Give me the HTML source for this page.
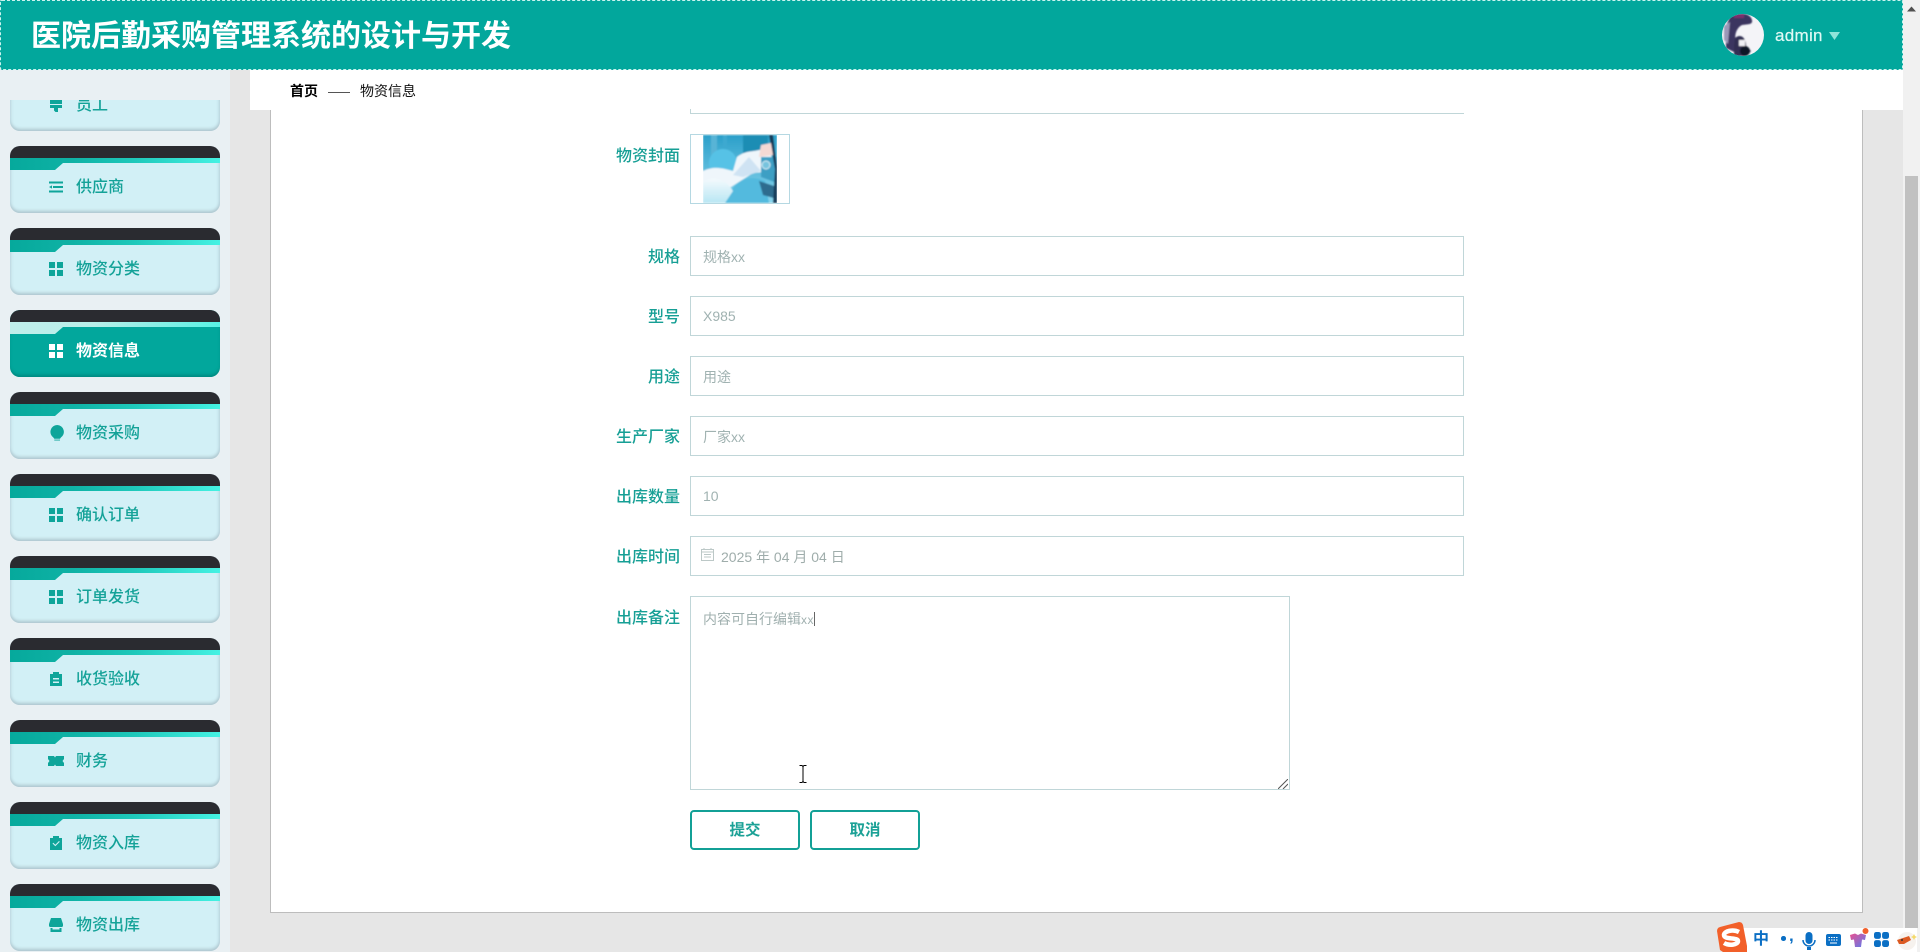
<!DOCTYPE html>
<html lang="zh">
<head>
<meta charset="utf-8">
<title>医院后勤采购管理系统的设计与开发</title>
<style>
html,body{margin:0;padding:0;width:1920px;height:952px;overflow:hidden;background:#e6e6e6;font-family:"Liberation Sans","Noto Sans CJK SC",sans-serif}
*{box-sizing:border-box}
.a{position:absolute}
#side{left:0;top:70px;width:230px;height:882px;background:#e9f0f3}
#clip{left:0;top:100px;width:230px;height:852px;overflow:hidden}
.card{position:absolute;left:10px;width:210px;height:67px;border-radius:10px;background:#d2f0f6;box-shadow:inset 0 -3px 3px -1px #aec6ce,inset 3px 0 3px -2px #c0dbe4,inset -3px 0 3px -2px #b8d4de;overflow:hidden}
.card .dk{position:absolute;left:0;top:0;width:100%;height:12px;background:#2a2b30}
.card .st{position:absolute;left:0;top:12px;width:100%;height:13px;background:linear-gradient(90deg,#06a99c 0%,#0fb2a5 30%,#1fc9bb 60%,#45f2e3 100%);clip-path:polygon(0 0,100% 0,100% 5px,53px 5px,45px 12px,0 12px)}
.card svg{position:absolute;left:39px;top:34px;width:14px;height:14px;fill:#0ea59a}
.card span{position:absolute;left:66px;top:31px;font-size:16px;line-height:22px;color:#14a298;font-weight:500;white-space:nowrap}
.card.on{background:#02a79c;box-shadow:inset 0 -3px 3px -1px #01887f}
.card.on .st{background:linear-gradient(90deg,#c0eeea,#b8efe9 40%,#58f2e4);clip-path:polygon(0 0,100% 0,100% 5px,53px 5px,45px 12px,0 12px)}
.card.on svg{fill:#fff}
.card.on span{color:#fff;font-weight:700}
.lb{position:absolute;right:1240px;font-size:16px;line-height:22px;color:#169f95;font-weight:500;white-space:nowrap}
.ip{position:absolute;left:690px;width:774px;height:40px;background:#fff;border:1px solid #c0d6d8;font-size:14px;line-height:40px;color:#a0b2b1;padding-left:12px;white-space:nowrap}
.btn{position:absolute;top:810px;width:110px;height:40px;border:2px solid #13a096;border-radius:4px;background:#fff;color:#1ba196;font-size:15.5px;font-weight:700;line-height:37px;text-align:center}
</style>
</head>
<body>
<div class="a" style="left:0;top:0;width:1920px;height:952px;background:#e6e6e6"></div>

<div class="a" id="side"></div>
<div class="a" id="clip">
  <div class="card" style="top:-36px"><div class="dk"></div><div class="st"></div>
    <svg viewBox="0 0 14 14"><path d="M1 0h12v6H1zM1 7h12v3H9v4H6.500L5 12.500V10H1z"/></svg><span>员工</span></div>
  <div class="card" style="top:46px"><div class="dk"></div><div class="st"></div>
    <svg viewBox="0 0 14 14"><path d="M0 1.500h14v2H0zM4 6h10v2H4zM0 10.500h14v2H0zM0 7l3-1.600v3.200z"/></svg><span>供应商</span></div>
  <div class="card" style="top:128px"><div class="dk"></div><div class="st"></div>
    <svg viewBox="0 0 14 14"><path d="M0 0h6v6H0zM8 0h6v6H8zM0 8h6v6H0zM8 8h6v6H8z"/></svg><span>物资分类</span></div>
  <div class="card on" style="top:210px"><div class="dk"></div><div class="st"></div>
    <svg viewBox="0 0 14 14"><path d="M0 0h6v6H0zM8 0h6v6H8zM0 8h6v6H0zM8 8h6v6H8z"/></svg><span>物资信息</span></div>
  <div class="card" style="top:292px"><div class="dk"></div><div class="st"></div>
    <svg viewBox="0 0 14 14" style="top:33px;height:16px;width:16px;left:38px"><path d="M7 0a6 6 0 0 1 3.200 11L9.500 12h-5l-.7-1A6 6 0 0 1 7 0zM4.500 12.800h5v.8h-5zM5.500 14.200h3v.6h-3z" transform="translate(1 0)"/></svg><span>物资采购</span></div>
  <div class="card" style="top:374px"><div class="dk"></div><div class="st"></div>
    <svg viewBox="0 0 14 14"><path d="M0 0h6v6H0zM8 0h6v6H8zM0 8h6v6H0zM8 8h6v6H8z"/></svg><span>确认订单</span></div>
  <div class="card" style="top:456px"><div class="dk"></div><div class="st"></div>
    <svg viewBox="0 0 14 14"><path d="M0 0h6v6H0zM8 0h6v6H8zM0 8h6v6H0zM8 8h6v6H8z"/></svg><span>订单发货</span></div>
  <div class="card" style="top:538px"><div class="dk"></div><div class="st"></div>
    <svg viewBox="0 0 14 14"><path fill-rule="evenodd" d="M1 2h3V0h6v2h3v12H1zM4 6v1.500h6V6zM4 9.500V11h6V9.500z"/></svg><span>收货验收</span></div>
  <div class="card" style="top:620px"><div class="dk"></div><div class="st"></div>
    <svg viewBox="0 0 16 14" style="left:38px;width:16px"><path d="M0 2h6l1 1.500L8 2h8v3l-1.500 2L16 9v3H8l-1-1.500L6 12H0V9l1.500-2L0 5zM10 3.500h1.500v2H10zM10 8.500h1.500v2H10z"/></svg><span style="left:66px">财务</span></div>
  <div class="card" style="top:702px"><div class="dk"></div><div class="st"></div>
    <svg viewBox="0 0 14 14"><path fill-rule="evenodd" d="M1 2h3V0h6v2h3v12H1zM3.500 7.500l2.800 2.800 4.500-4.500-.8-.8-3.700 3.700-2-2z"/></svg><span>物资入库</span></div>
  <div class="card" style="top:784px"><div class="dk"></div><div class="st"></div>
    <svg viewBox="0 0 14 14"><path d="M2 0h10l2 6v2a2 2 0 0 1-1 1H1a2 2 0 0 1-1-1V6zM1.500 10h2v1.500h7V10h2v4h-11z"/></svg><span>物资出库</span></div>
</div>

<!-- panel -->
<div class="a" style="left:270px;top:100px;width:1593px;height:813px;background:#fff;border:1px solid #bdbdbd;border-top:0"></div>
<div class="a" style="left:250px;top:70px;width:1653px;height:40px;background:#fff"></div>
<div class="a" style="left:290px;top:81px;font-size:14px;line-height:20px;font-weight:700;color:#000">首页</div>
<div class="a" style="left:328px;top:92px;width:22px;height:1px;background:#555"></div>
<div class="a" style="left:360px;top:81px;font-size:14px;line-height:20px;color:#111">物资信息</div>

<!-- form -->
<div class="a" style="left:690px;top:100px;width:774px;height:14px;border-bottom:1px solid #c0d6d8;border-left:1px solid #c0d6d8;background:#fff;clip-path:inset(9px 0 0 0)"></div>
<div class="lb" style="top:146px">物资封面</div>
<div class="a" style="left:690px;top:134px;width:100px;height:70px;border:1px solid #b5d8e2;background:#fff">
<svg width="74" height="68" viewBox="0 0 74 68" style="position:absolute;left:12px;top:0">
<defs>
<linearGradient id="g1" x1="0" y1="0" x2="0" y2="1"><stop offset="0" stop-color="#2b9fc9"/><stop offset="1" stop-color="#8ad6ee"/></linearGradient>
<linearGradient id="g2" x1="0" y1="0" x2="0" y2="1"><stop offset="0" stop-color="#f4fafd"/><stop offset="1" stop-color="#b8e6f3"/></linearGradient>
<clipPath id="ci"><rect width="74" height="68"/></clipPath>
<filter id="b1"><feGaussianBlur stdDeviation=".8"/></filter>
</defs>
<g clip-path="url(#ci)"><g filter="url(#b1)">
<rect width="74" height="68" fill="url(#g1)"/>
<rect x="8" y="0" width="6" height="34" fill="#58b4d6"/>
<rect x="20" y="0" width="4" height="30" fill="#3da9d0"/>
<rect x="40" y="0" width="25" height="18" fill="#1d8db4"/>
<circle cx="20" cy="28" r="14" fill="#57c2e6"/>
<path d="M0 36 C12 30 22 34 30 36 L34 22 C44 14 52 18 66 12 L72 36 L50 38 L28 52 L0 60Z" fill="#eff6fb"/>
<path d="M30 40 L46 22 L58 36 L40 42Z" fill="#cfe3f3"/>
<path d="M22 68 C30 46 44 38 62 46 L66 68Z" fill="#52bade"/>
<path d="M0 46 C14 40 24 46 30 56 L22 68 H0Z" fill="url(#g2)"/>
<path d="M56 46 L74 52 V64 L60 60Z" fill="#2d6c8e"/>
<path d="M58 22 H74 V48 L58 42Z" fill="#3d9fc4"/>
<circle cx="63" cy="30" r="4" fill="#77c3de" stroke="#d8eef6"/>
<path d="M66 0 L70 0 L74 32 L74 68 L70 68 L72 34Z" fill="#173a58"/>
<path d="M58 10 L68 8 L70 20 L56 22Z" fill="#f4d9d4"/>
</g></g>
</svg>
</div>

<div class="lb" style="top:247px">规格</div>
<div class="ip" style="top:236px">规格xx</div>
<div class="lb" style="top:307px">型号</div>
<div class="ip" style="top:296px;line-height:38px">X985</div>
<div class="lb" style="top:367px">用途</div>
<div class="ip" style="top:356px">用途</div>
<div class="lb" style="top:427px">生产厂家</div>
<div class="ip" style="top:416px">厂家xx</div>
<div class="lb" style="top:487px">出库数量</div>
<div class="ip" style="top:476px;line-height:38px">10</div>
<div class="lb" style="top:547px">出库时间</div>
<div class="ip" style="top:536px;padding-left:30px;color:#9fadab;line-height:40px">2025 年 04 月 04 日</div>
<svg class="a" style="left:701px;top:548px" width="13" height="13" viewBox="0 0 13 13" fill="none" stroke="#bcc8c7"><rect x=".5" y="1.500" width="12" height="11"/><path d="M.5 4h12M3 6.500h7M3 9h7M3 0v2M10 0v2"/></svg>

<div class="lb" style="top:608px">出库备注</div>
<div class="a" style="left:690px;top:596px;width:600px;height:194px;border:1px solid #c0d6d8;background:#fff;font-size:14px;line-height:20px;color:#a0b0af;padding:12px 12px">内容可自行编辑<span style="font-size:12px;letter-spacing:.5px">xx</span><span style="display:inline-block;width:1px;height:14px;background:#666;vertical-align:-2px"></span></div>
<svg class="a" style="left:1278px;top:779px" width="10" height="10" viewBox="0 0 10 10" stroke="#555" fill="none"><path d="M0 10L10 0M5 10L10 5"/></svg>
<svg class="a" style="left:798px;top:765px" width="10" height="18" viewBox="0 0 10 18" stroke="#000" fill="none"><path d="M1.500 .5h2.500l1 1 1-1h2.500M5 1.500v15M1.500 17.500h2.500l1-1 1 1h2.500"/></svg>

<div class="btn" style="left:690px">提交</div>
<div class="btn" style="left:810px">取消</div>

<!-- scrollbar -->
<div class="a" style="left:1903px;top:0;width:17px;height:952px;background:#f1f1f1"></div>
<div class="a" style="left:1905px;top:176px;width:13px;height:752px;background:#c1c1c1"></div>
<svg class="a" style="left:1907px;top:6px" width="9" height="6" viewBox="0 0 9 6"><path d="M0 5.500L4.500 .5 9 5.500z" fill="#505050"/></svg>

<!-- header -->
<div class="a" style="left:0;top:0;width:1903px;height:70px;background:#02a79c;border:1px dashed #c9f3ee;border-radius:2px"></div>
<div class="a" style="left:31px;top:16px;font-size:30px;line-height:42px;font-weight:700;color:#fff;white-space:nowrap">医院后勤采购管理系统的设计与开发</div>
<svg class="a" style="left:1722px;top:14px" width="42" height="42" viewBox="0 0 42 42">
<defs><clipPath id="cc"><circle cx="21" cy="21" r="21"/></clipPath><filter id="b2"><feGaussianBlur stdDeviation=".8"/></filter></defs>
<g clip-path="url(#cc)"><rect width="42" height="42" fill="#f4f4f8"/>
<g filter="url(#b2)">
<path d="M8 3 C14 -2 28 -2 30 6 C31 11 26 10 20 11 C14 14 12 22 14 28 L12 38 L4 34 L4 12Z" fill="#3b3460"/>
<path d="M12 0h10v4H12z" fill="#7a2f6c"/>
<path d="M13 24 C19 19 24 24 24 32 L29 37 L24 42 H12 V32Z" fill="#302d52"/>
<circle cx="23" cy="37" r="5" fill="#111426"/>
<path d="M2 12 L8 8 L6 30 L2 26Z" fill="#9b98b8"/>
<path d="M17 26 L23 26 L23 32 L17 32Z" fill="#f1f1f6"/>
</g></g></svg>
<div class="a" style="left:1775px;top:25px;font-size:17px;line-height:22px;font-weight:500;color:#dff9f5;letter-spacing:.3px;-webkit-text-stroke:.2px #dff9f5">admin</div>
<svg class="a" style="left:1829px;top:32px" width="11" height="8" viewBox="0 0 11 8"><path d="M0 0h11L5.500 8z" fill="#8fe5da"/></svg>

<!-- IME bar -->
<div class="a" style="left:1740px;top:928px;width:177px;height:24px;background:#fff"></div>
<svg class="a" style="left:1715px;top:922px" width="32" height="30" viewBox="0 0 32 30">
<path d="M2 9 Q2 6 5 5 L24 0 Q27 0 28 3 L32 24 L32 30 H8 L5 28Z" fill="#f2602a"/>
<path d="M24 10 C18 7 9 9 9 13 C9 18 23 15 23 19 C23 23 14 24 9 21" fill="none" stroke="#fff" stroke-width="4.500"/>
</svg>
<div class="a" style="left:1753px;top:930px;font-size:16px;line-height:20px;font-weight:700;color:#0b6fc4">中</div>
<div class="a" style="left:1781px;top:936px;width:5px;height:5px;background:#0b6fc4;border-radius:50%;box-shadow:inset 0 0 0 1px #0b6fc4"></div>
<div class="a" style="left:1789px;top:926px;font-size:17px;line-height:20px;font-weight:700;color:#0b6fc4">,</div>
<svg class="a" style="left:1802px;top:932px" width="14" height="20" viewBox="0 0 14 20" fill="#0b6fc4"><rect x="3.500" y="0" width="7" height="12" rx="3.500"/><path d="M1 8a6 6 0 0 0 12 0" fill="none" stroke="#0b6fc4" stroke-width="1.500"/><rect x="5" y="15" width="4" height="3"/></svg>
<svg class="a" style="left:1826px;top:934px" width="15" height="13" viewBox="0 0 15 13"><rect width="15" height="12" rx="2" fill="#0b6fc4"/><path d="M2.500 3.500h10M2.500 6h10" stroke="#fff" stroke-dasharray="1.500 1"/><path d="M4 9h7" stroke="#fff"/></svg>
<svg class="a" style="left:1849px;top:928px" width="21" height="22" viewBox="0 0 21 22"><defs><linearGradient id="sh" x1="0" y1="0" x2="1" y2="1"><stop offset="0" stop-color="#ea4f8f"/><stop offset="1" stop-color="#5a7ef0"/></linearGradient></defs><path d="M1 7l5-1.500 3 1.500 3-1.500 5 1.500-1 5-3-.5-1 7.500H6L5 11.500 2 12z" fill="url(#sh)"/><circle cx="16.500" cy="3" r="3" fill="#f2602a"/></svg>
<svg class="a" style="left:1874px;top:932px" width="15" height="15" viewBox="0 0 13 13" fill="#0b6fc4"><rect width="6" height="6" rx="2"/><rect x="7" width="6" height="6" rx="2"/><rect y="7" width="6" height="6" rx="2"/><rect x="7" y="7" width="6" height="6" rx="2"/></svg>
<svg class="a" style="left:1896px;top:931px" width="21" height="19" viewBox="0 0 21 19"><circle cx="11" cy="10" r="9" fill="#f6f2ee"/><path d="M1 9 L13 5 L15 9 L8 13 L3 13Z" fill="#dc5a22"/><circle cx="6" cy="9" r="1" fill="#333"/><path d="M18 3l1 2 2 1-2 1-1 2-1-2-2-1 2-1z" fill="#f4da6a"/></svg>
</body>
</html>
